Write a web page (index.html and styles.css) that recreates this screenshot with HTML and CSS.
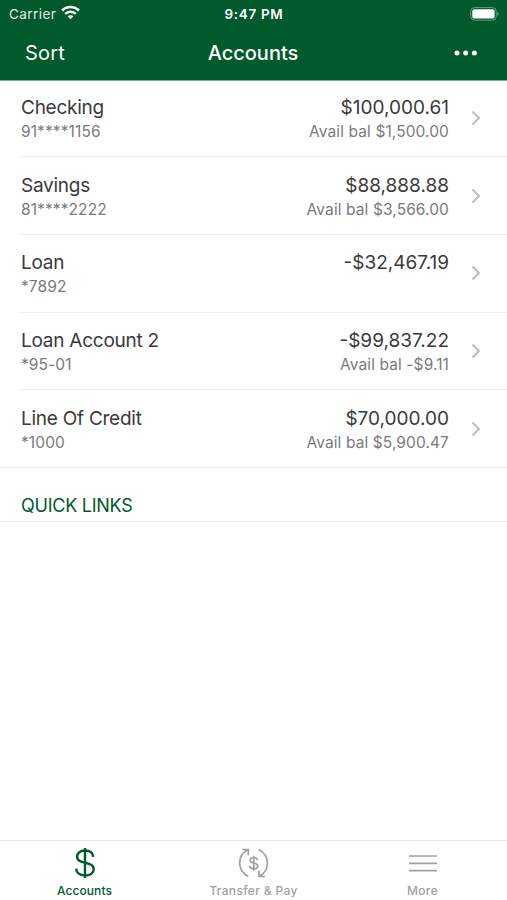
FILE: index.html
```html
<!DOCTYPE html>
<html lang="en">
<head>
<meta charset="utf-8">
<title>Accounts</title>
<link rel="stylesheet" href="styles.css">
</head>
<body>
<header class="top">
  <div class="status">
    <div class="carrier"><span class="t-carrier">Carrier</span>
      <svg width="19" height="15" viewBox="0 0 19 15" fill="none" stroke="#fff" stroke-width="2.6"><path d="M1.100 5.500C5.800.8 13.200.8 17.900 5.500M4.200 8.900c3-2.900 7.600-2.900 10.600 0"/><path d="M9.500 14.200L6.600 11.300c1.600-1.500 4.200-1.500 5.800 0z" fill="#fff" stroke="none"/></svg>
    </div>
    <span class="time">9:47 PM</span>
    <svg class="battery" width="29" height="14" viewBox="0 0 29 14"><rect x=".7" y=".6" width="25.500" height="12.600" rx="3.800" fill="none" stroke="#6c9d7d"/><rect x="2.300" y="2.200" width="22.300" height="9.400" rx="2.200" fill="#fff"/><path d="M27.200 4.900c1.800.8 1.800 3.200 0 4z" fill="#6c9d7d"/></svg>
  </div>
  <nav class="bar">
    <span class="sort">Sort</span><h1>Accounts</h1>
    <svg class="dots" width="24" height="6" viewBox="0 0 24 6" fill="#fff"><circle cx="3" cy="3" r="2.500"/><circle cx="11.700" cy="3" r="2.500"/><circle cx="20.400" cy="3" r="2.500"/></svg>
  </nav>
</header>
<main>
  <ul class="accounts">
    <li><div class="left"><b>Checking</b><small>91****1156</small></div><div class="right"><b>$100,000.61</b><small>Avail bal $1,500.00</small></div><svg class="chev" viewBox="0 0 10 16"><path d="M1.500 1.500L8 8l-6.500 6.500"/></svg></li>
    <li><div class="left"><b>Savings</b><small>81****2222</small></div><div class="right"><b>$88,888.88</b><small>Avail bal $3,566.00</small></div><svg class="chev" viewBox="0 0 10 16"><path d="M1.500 1.500L8 8l-6.500 6.500"/></svg></li>
    <li><div class="left"><b>Loan</b><small>*7892</small></div><div class="right"><b>-$32,467.19</b></div><svg class="chev" viewBox="0 0 10 16"><path d="M1.500 1.500L8 8l-6.500 6.500"/></svg></li>
    <li><div class="left"><b>Loan Account 2</b><small>*95-01</small></div><div class="right"><b>-$99,837.22</b><small>Avail bal -$9.11</small></div><svg class="chev" viewBox="0 0 10 16"><path d="M1.500 1.500L8 8l-6.500 6.500"/></svg></li>
    <li><div class="left"><b>Line Of Credit</b><small>*1000</small></div><div class="right"><b>$70,000.00</b><small>Avail bal $5,900.47</small></div><svg class="chev" viewBox="0 0 10 16"><path d="M1.500 1.500L8 8l-6.500 6.500"/></svg></li>
  </ul>
  <h2>QUICK LINKS</h2>
</main>
<footer class="tabs">
  <div class="tab active"><svg width="32" height="32" viewBox="0 0 32 32" fill="none" stroke="#005a2b" stroke-width="2.400"><path d="M16 1v30M24.300 9.800C23.800 5.700 20.800 3.500 16 3.500c-4.700 0-7.900 2.500-7.900 6.100 0 8.700 16.600 4 16.600 12.600 0 3.900-3.500 6.300-8.700 6.300-5.200 0-8.600-2.700-8.900-6.800"/></svg><span>Accounts</span></div>
  <div class="tab"><svg width="32" height="32" viewBox="0 0 32 32" fill="none" stroke="#a0a0a2" stroke-width="1.700"><path d="M10.300 29.500C-1.200 23.500-1.200 8.500 10.100 2.500M4.300 2.500h6v5.700M20.700 2.500C32.200 8.500 32.200 23.500 21 29.500M21 23.800v5.700h6"/><path d="M15.700 8.800v14.600M19.500 13.200c-.3-1.800-1.600-2.700-3.800-2.700-2.200 0-3.700 1-3.700 2.700 0 3.900 7.800 1.900 7.800 5.700 0 1.800-1.600 2.900-4 2.900-2.500 0-4-1.100-4.200-3.100"/></svg><span>Transfer &amp; Pay</span></div>
  <div class="tab"><svg width="32" height="32" viewBox="0 0 32 32" fill="none" stroke="#a0a0a2" stroke-width="1.700"><path d="M2 9h28M2 16.400h28M2 23.700h28"/></svg><span>More</span></div>
</footer>
</body>
</html>
```
FILE: styles.css
```css
* { box-sizing: border-box; }
body { margin: 0; height: 900px; display: flex; flex-direction: column; background: #fff; font-family: Inter, sans-serif; color: #3a3a3a; }
.top { height: 81px; background: #005a2b; border-bottom: 1px solid #86ad94; color: #fff; }
.status { height: 27px; padding: 0 8px 0 9px; display: grid; grid-template-columns: 1fr auto 1fr; align-items: center; font-size: 13px; }
.carrier { display: flex; align-items: center; gap: 5px; }
.t-carrier { font-size: 13.500px; letter-spacing: .45px; color: #e3eee7; }
.carrier svg { margin-top: -2px; }
.time { font-size: 13.500px; font-weight: 600; letter-spacing: .65px; }
.battery { justify-self: end; }
.bar { height: 51px; padding: 0 26px 0 25px; display: grid; grid-template-columns: 1fr auto 1fr; align-items: center; font-size: 20px; }
h1 { margin: 0; font-size: 20px; font-weight: 500; }
.sort { letter-spacing: .2px; }
.dots { justify-self: end; margin-right: 3px; }
main { flex: 1; }
.accounts { list-style: none; margin: 0; padding: 0; border-bottom: 1px solid #ececec; }
li { height: 77.750px; margin-left: 21px; padding: 15.400px 26px 0 0; display: flex; border-bottom: 1px solid #ececec; }
li:first-child { height: 76.200px; padding-top: 14px; }
li:last-child { height: 76.750px; border-bottom: 0; }
.left { flex: 1; }
.right { text-align: right; margin-right: 22px; }
b, small { display: block; white-space: nowrap; }
b { font-size: 19px; line-height: 26px; font-weight: 400; letter-spacing: -.25px; }
.right b { letter-spacing: 0; }
small { font-size: 15.500px; line-height: 22px; color: #7b7b7b; letter-spacing: .1px; }
.chev { width: 10px; height: 16px; margin-top: 15px; fill: none; stroke: #bdbdc1; stroke-width: 2; }
h2 { margin: 0; height: 54px; padding: 26px 0 0 21px; border-bottom: 1px solid #ececec; font-size: 18px; line-height: 24px; font-weight: 400; letter-spacing: -.25px; color: #005a2b; }
.tabs { height: 60px; border-top: 1px solid #e6e6e6; display: grid; grid-template-columns: repeat(3, 1fr); }
.tab { display: flex; flex-direction: column; align-items: center; padding-top: 6px; font-size: 12px; font-weight: 500; line-height: 16px; letter-spacing: .35px; color: #a0a0a2; }
.tab span { margin-top: 4px; }
.active { color: #005a2b; letter-spacing: .1px; }
```
